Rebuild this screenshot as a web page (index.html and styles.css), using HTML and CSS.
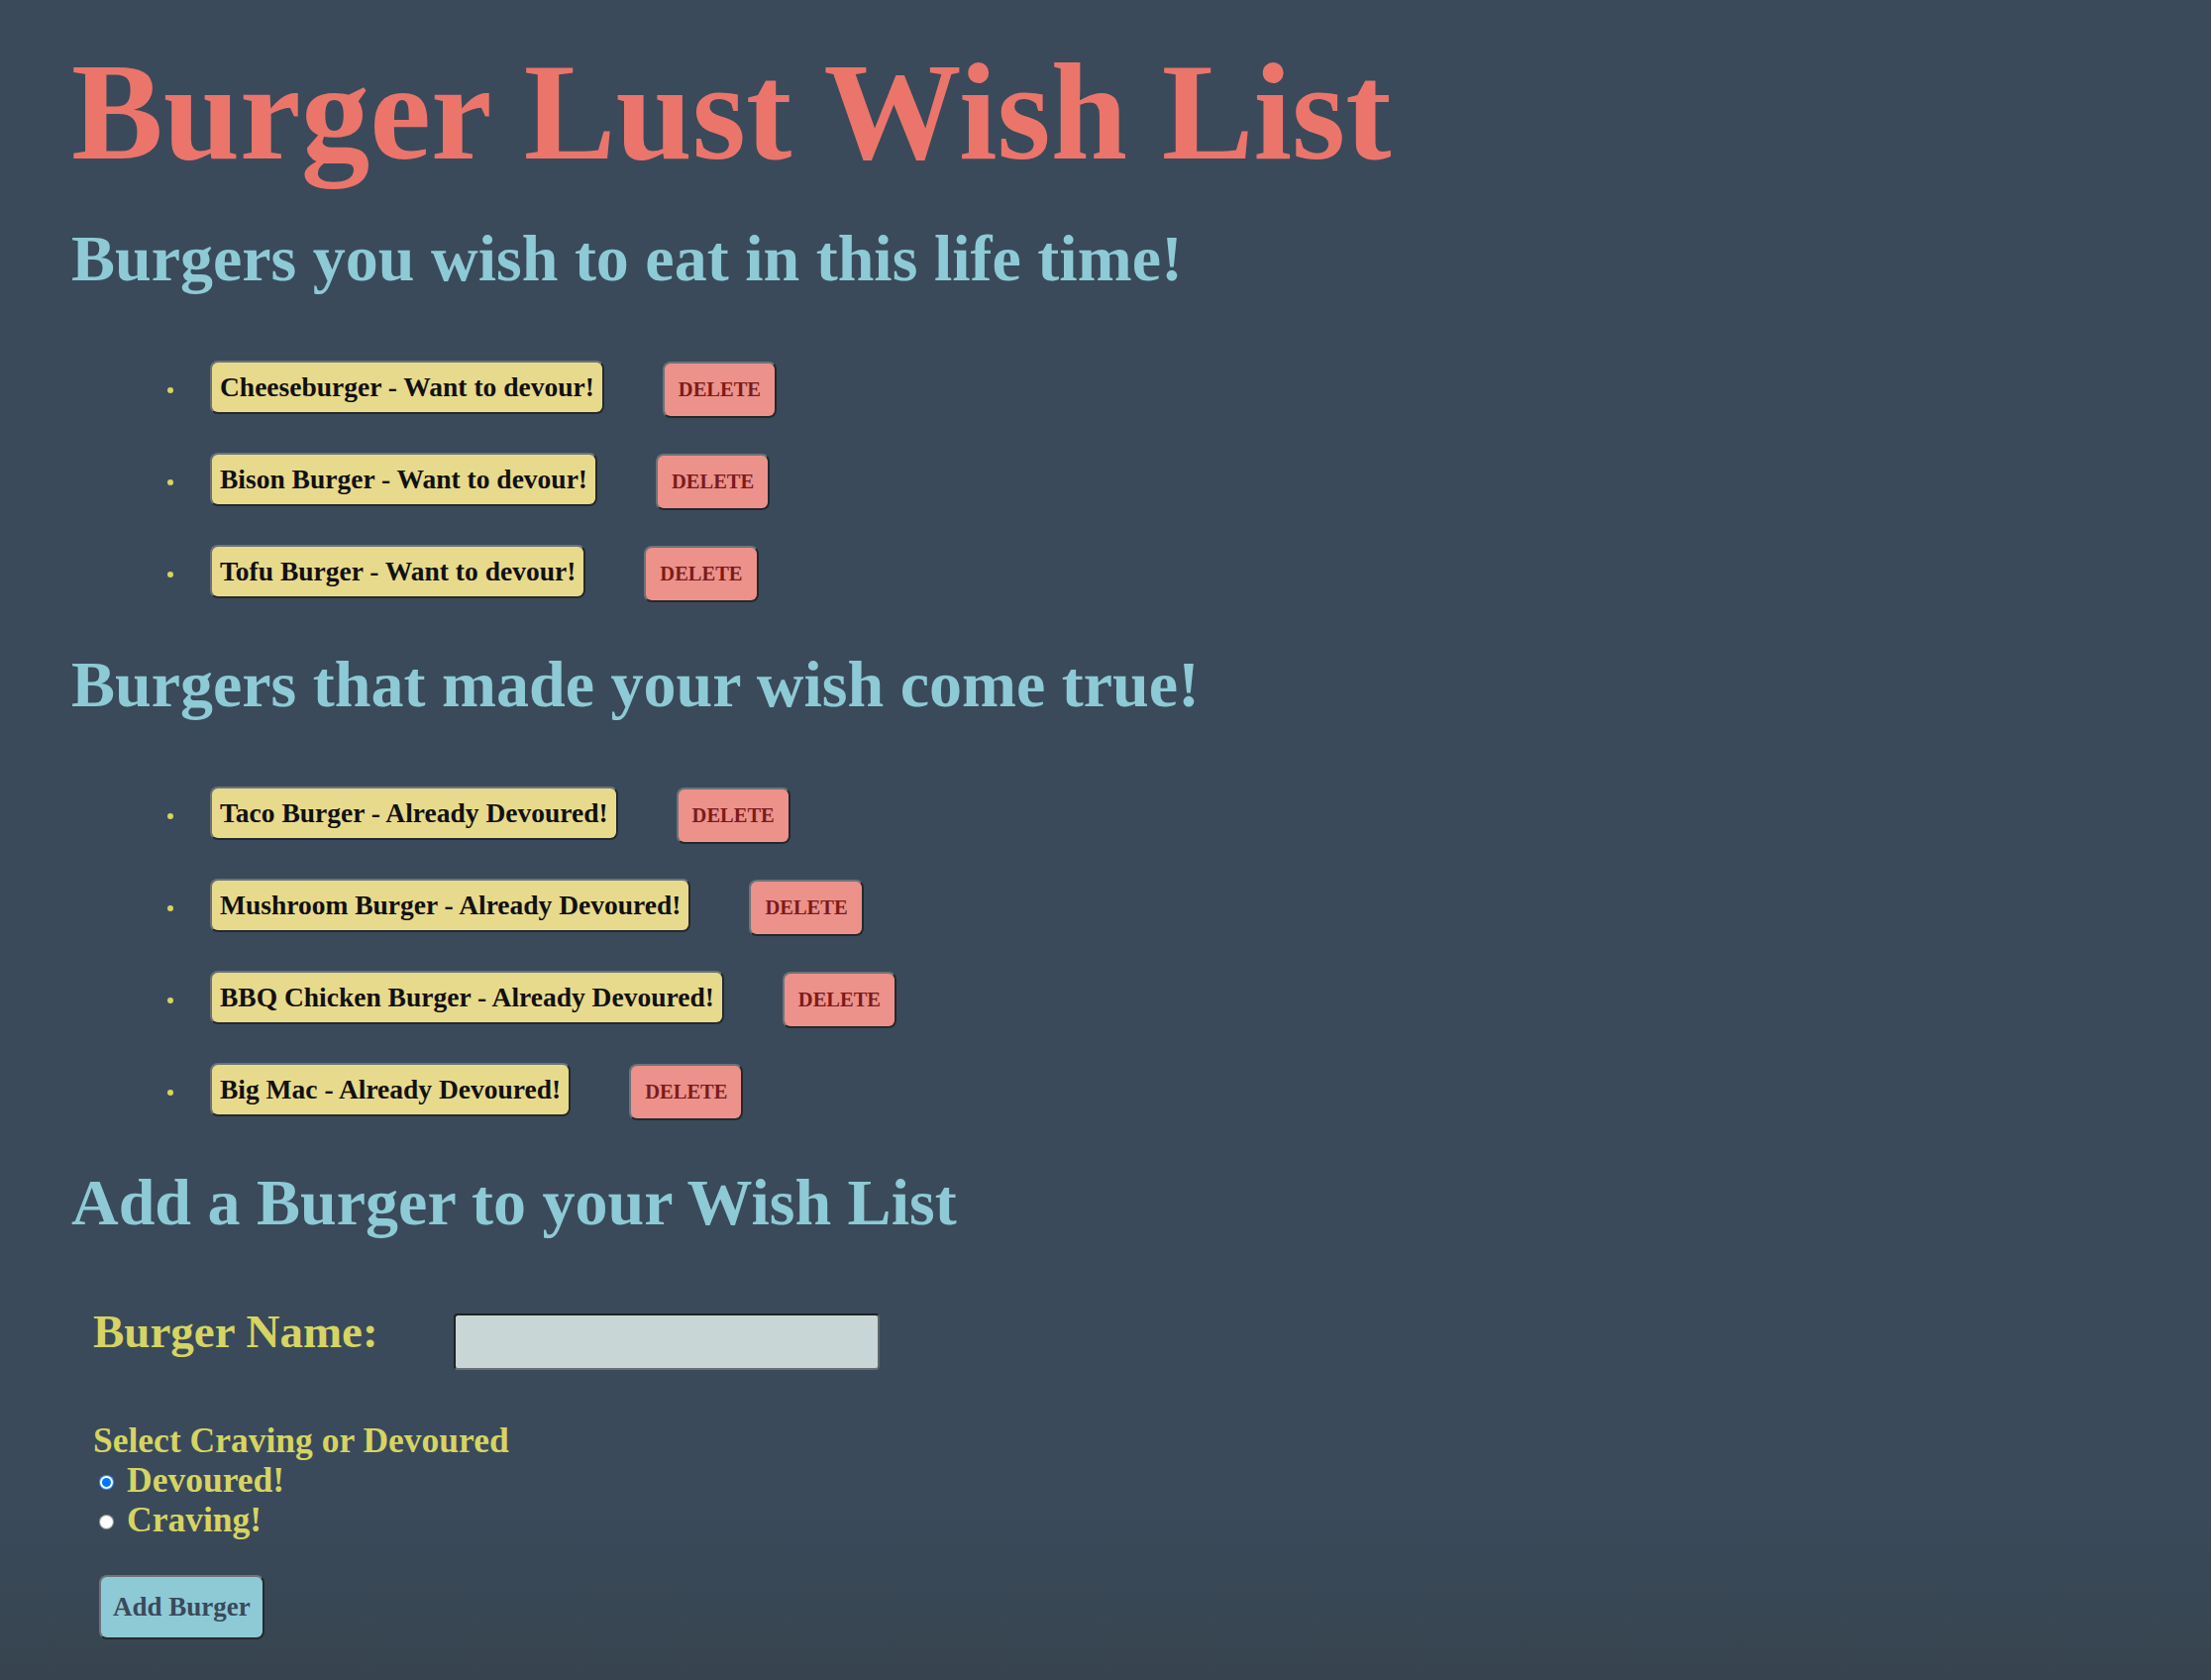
FILE: index.html
```html
<!DOCTYPE html>
<html lang="en">
<head>
<meta charset="utf-8">
<title>Burger Lust Wish List</title>
<link rel="stylesheet" href="styles.css">
</head>
<body>
<div class="page">
  <h1 class="title">Burger Lust Wish List</h1>

  <h2 class="section-title">Burgers you wish to eat in this life time!</h2>
  <ul class="burger-list">
    <li class="burger-item"><span class="burger-name">Cheeseburger - Want to devour!</span><button class="delete-btn">DELETE</button></li>
    <li class="burger-item"><span class="burger-name">Bison Burger - Want to devour!</span><button class="delete-btn">DELETE</button></li>
    <li class="burger-item"><span class="burger-name">Tofu Burger - Want to devour!</span><button class="delete-btn">DELETE</button></li>
  </ul>

  <h2 class="section-title">Burgers that made your wish come true!</h2>
  <ul class="burger-list">
    <li class="burger-item"><span class="burger-name">Taco Burger - Already Devoured!</span><button class="delete-btn">DELETE</button></li>
    <li class="burger-item"><span class="burger-name">Mushroom Burger - Already Devoured!</span><button class="delete-btn">DELETE</button></li>
    <li class="burger-item"><span class="burger-name">BBQ Chicken Burger - Already Devoured!</span><button class="delete-btn">DELETE</button></li>
    <li class="burger-item"><span class="burger-name">Big Mac - Already Devoured!</span><button class="delete-btn">DELETE</button></li>
  </ul>

  <h2 class="section-title">Add a Burger to your Wish List</h2>
  <form class="add-form">
    <div class="name-row">
      <label class="name-label" for="burger-name">Burger Name:</label>
      <input class="name-input" type="text" id="burger-name">
    </div>
    <div class="choice-group">
      <div class="choice-title">Select Craving or Devoured</div>
      <label class="choice"><input class="choice-radio" type="radio" name="devoured" checked> Devoured!</label>
      <label class="choice"><input class="choice-radio" type="radio" name="devoured"> Craving!</label>
    </div>
    <button class="add-btn" type="button">Add Burger</button>
  </form>
</div>
</body>
</html>
```

FILE: styles.css
```css
html {
  min-height: 100%;
  background: linear-gradient(to bottom, #3a4a5a 0%, #3a4a5a 90%, #37444f 100%);
}

body {
  margin: 0;
  font-family: "Liberation Serif", "Times New Roman", serif;
  font-weight: bold;
}

.page {
  padding: 44px 72px 0 72px;
}

.title {
  margin: 0;
  font-size: 139px;
  line-height: 1;
  font-weight: bold;
  color: #eb756b;
}

.section-title {
  margin: 45px 0 0 0;
  font-size: 66px;
  line-height: 1;
  font-weight: bold;
  color: #8ecad6;
}

.burger-list {
  margin: 70px 0 50px 0;
  padding: 0 0 0 116px;
  color: #d6d462;
  font-size: 21px;
}

.burger-item {
  padding-left: 24px;
}

.burger-item + .burger-item {
  margin-top: 35px;
}

.burger-name {
  display: inline-block;
  padding: 9px 8px;
  font-size: 27.5px;
  color: #111;
  background: #e8da8c;
  border: 2px solid;
  border-color: #6d7379 #25282b #25282b #6d7379;
  border-radius: 8px;
}

.delete-btn {
  margin-left: 59px;
  padding: 15px 14px;
  font-family: "Liberation Serif", "Times New Roman", serif;
  font-weight: bold;
  font-size: 20.5px;
  color: #7c1b1b;
  background: #ec928b;
  border: 2px solid;
  border-color: #6d7379 #25282b #25282b #6d7379;
  border-radius: 8px;
}

.add-form {
  padding: 79px 0 0 22px;
  color: #d6d462;
}

.name-row {
  display: flex;
  align-items: flex-start;
  gap: 76px;
}

.name-label {
  margin-top: -5px;
  font-size: 47px;
  line-height: 1;
}

.name-input {
  margin: 0;
  padding: 0 8px;
  box-sizing: border-box;
  width: 430px;
  height: 57px;
  background: #c9d6d6;
  border: 2px solid;
  border-color: #1e2124 #5e656b #6a7075 #1e2124;
  border-radius: 4px;
}

.choice-group {
  margin-top: 51px;
  font-size: 35.5px;
  line-height: 40px;
}

.choice {
  display: flex;
  align-items: center;
  gap: 13px;
  padding-left: 6px;
}

.choice-radio {
  width: 15px;
  height: 15px;
  margin: 4px 0 0 0;
}

.add-btn {
  margin: 36px 0 0 6px;
  padding: 15px 12px;
  font-family: "Liberation Serif", "Times New Roman", serif;
  font-weight: bold;
  font-size: 27px;
  color: #3a4a5a;
  background: #8ecad6;
  border: 2px solid;
  border-color: #6d7379 #25282b #25282b #6d7379;
  border-radius: 8px;
}
```
